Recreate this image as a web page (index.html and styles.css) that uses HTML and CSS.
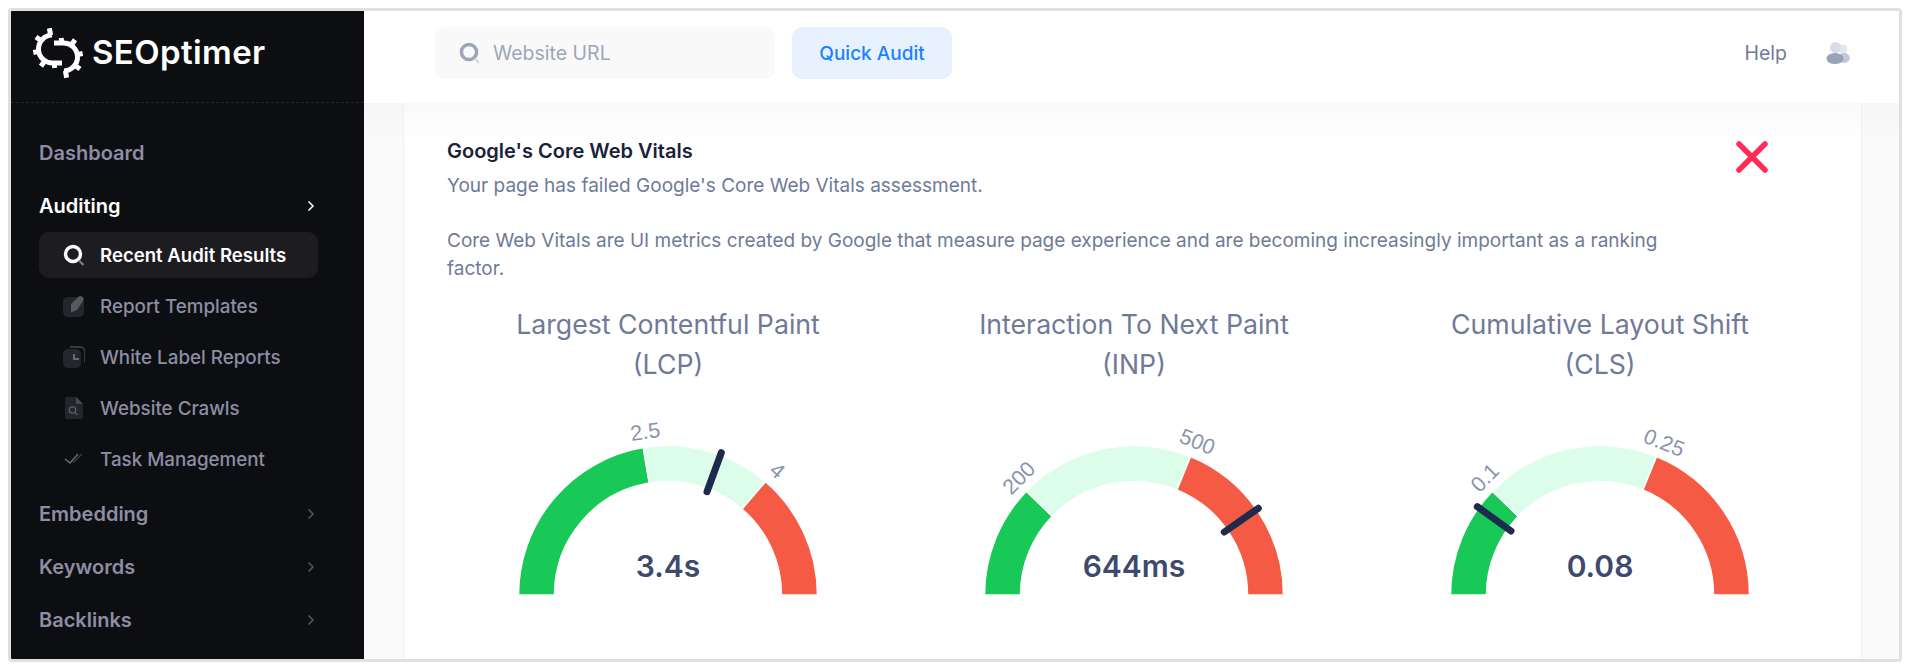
FILE: index.html
```html
<!DOCTYPE html>
<html lang="en">
<head>
  <meta charset="UTF-8">
  <title>SEOptimer - Core Web Vitals</title>
  <link rel="stylesheet" href="styles.css">
</head>
<body>
  <div class="frame">
    <aside class="sidebar">
      <div class="logo">
        <svg class="logo-mark" viewBox="0 0 50 52" fill="none" stroke="#fff">
          <g>
            <path d="M19 8A14 14 0 1 0 20 36h9" stroke-width="5"/>
            <path d="M17.600 8.200 16.400 1.300M8.500 14 3 10M6.200 24.400.300 25.500M12 33.500 8 39.200M21.200 36 21.800 41" stroke-width="5"/>
          </g>
          <g transform="rotate(180 25 26)">
            <path d="M19 8A14 14 0 1 0 20 36h9" stroke-width="5"/>
            <path d="M17.600 8.200 16.400 1.300M8.500 14 3 10M6.200 24.400.300 25.500M12 33.500 8 39.200M21.200 36 21.800 41" stroke-width="5"/>
          </g>
        </svg>
        <span class="logo-text">SEOptimer</span>
      </div>
      <nav class="nav">
        <a class="nav-top">Dashboard</a>
        <a class="nav-top nav-open">Auditing
          <svg class="chev" viewBox="0 0 8 12"><path d="M1.500 1.500 6 6l-4.500 4.500"/></svg>
        </a>
        <div class="sub-list">
          <a class="sub-item sub-active">
            <svg class="sub-icon" viewBox="0 0 22 22" fill="none">
              <circle cx="10" cy="10" r="7.500" stroke="#fff" stroke-width="3.400"/>
              <path d="M16.500 17 20.500 21" stroke="#77777d" stroke-width="2.400"/>
            </svg>
            Recent Audit Results
          </a>
          <a class="sub-item">
            <svg class="sub-icon" viewBox="0 0 22 22">
              <rect y="2" width="21" height="20" rx="5" fill="#25262b"/>
              <path d="M8 9 15 2.500a2.500 2.500 0 0 1 5 3.500L14 15l-6 2.500z" fill="#57585f"/>
            </svg>
            Report Templates
          </a>
          <a class="sub-item">
            <svg class="sub-icon" viewBox="0 0 22 22">
              <path d="M7 1h10a5 5 0 0 1 5 5v10" fill="none" stroke="#3a3b41" stroke-width="2"/>
              <rect y="3" width="18" height="19" rx="5" fill="#25262b"/>
              <path d="M11 8v5h5" fill="none" stroke="#6a6b72" stroke-width="2"/>
            </svg>
            White Label Reports
          </a>
          <a class="sub-item">
            <svg class="sub-icon" viewBox="0 0 22 22">
              <path d="M4 0h9l7 7v13a2 2 0 0 1-2 2H4a2 2 0 0 1-2-2V2a2 2 0 0 1 2-2z" fill="#25262b"/>
              <path d="M13 0l7 7h-7z" fill="#4a4b52"/>
              <circle cx="9.500" cy="13" r="3.200" fill="none" stroke="#5e5f66" stroke-width="1.300"/>
              <path d="M12 15.500 14.500 18" stroke="#5e5f66" stroke-width="1.300"/>
            </svg>
            Website Crawls
          </a>
          <a class="sub-item">
            <svg class="sub-icon" viewBox="0 0 22 22" fill="none" stroke-width="1.300">
              <path d="M2 11l5 4 8-9" stroke="#6d6e76"/>
              <path d="M10 14.500 19 6" stroke="#3e3f45"/>
            </svg>
            Task Management
          </a>
        </div>
        <a class="nav-top">Embedding
          <svg class="chev" viewBox="0 0 8 12"><path d="M1.500 1.500 6 6l-4.500 4.500"/></svg>
        </a>
        <a class="nav-top">Keywords
          <svg class="chev" viewBox="0 0 8 12"><path d="M1.500 1.500 6 6l-4.500 4.500"/></svg>
        </a>
        <a class="nav-top">Backlinks
          <svg class="chev" viewBox="0 0 8 12"><path d="M1.500 1.500 6 6l-4.500 4.500"/></svg>
        </a>
      </nav>
    </aside>

    <div class="right">
      <header class="topbar">
        <div class="search-box">
          <svg class="search-icon" viewBox="0 0 22 22" fill="none">
            <circle cx="10" cy="10" r="7.600" stroke="#9ea5bb" stroke-width="3.500"/>
            <path d="M16 16.500 20 21" stroke="#d5d8e2" stroke-width="2.200"/>
          </svg>
          <span>Website URL</span>
        </div>
        <button class="audit-btn">Quick Audit</button>
        <a class="help">Help</a>
        <svg class="users-icon" viewBox="0 0 24 22">
          <circle cx="17" cy="7" r="4.500" fill="#e6e8ee"/>
          <ellipse cx="18" cy="16" rx="6" ry="5" fill="#c3c8d6"/>
          <circle cx="9.500" cy="5.500" r="5.500" fill="#d9dce6"/>
          <ellipse cx="9" cy="16.500" rx="8.500" ry="5.500" fill="#9aa2b8"/>
        </svg>
      </header>

      <main class="content">
        <section class="card">
          <div class="card-head">
            <div class="card-copy">
              <h3>Google's Core Web Vitals</h3>
              <p>Your page has failed Google's Core Web Vitals assessment.</p>
              <p class="spaced">Core Web Vitals are UI metrics created by Google that measure page experience and are becoming increasingly important as a ranking factor.</p>
            </div>
            <svg class="fail-icon" viewBox="0 0 32 32"><path d="M3 3 29 29M29 3 3 29"/></svg>
          </div>

          <div class="gauges">
            <div class="gauge">
              <h4>Largest Contentful Paint<br>(LCP)</h4>
              <svg class="gauge-svg" viewBox="0 0 340 200">
                <path class="seg-good" d="M20.500 194A149.500 149.500 0 0 1 145.300 46.600L151.300 82.100A113.500 113.500 0 0 0 56.500 194Z"/>
                <path class="seg-mid" d="M145.300 46.600A149.500 149.500 0 0 1 267.500 80.700L244 108A113.500 113.500 0 0 0 151.300 82.100Z"/>
                <path class="seg-bad" d="M267.500 80.700A149.500 149.500 0 0 1 319.500 194L283.500 194A113.500 113.500 0 0 0 244 108Z"/>
                <line class="needle" x1="209" y1="90.700" x2="223.300" y2="51.700"/>
                <text class="tick" x="147.300" y="31" transform="rotate(-8 147.300 31)">2.5</text>
                <text class="tick" x="279" y="70" transform="rotate(41 279 70)">4</text>
                <text class="value" x="170" y="165">3.4s</text>
              </svg>
            </div>
            <div class="gauge">
              <h4>Interaction To Next Paint<br>(INP)</h4>
              <svg class="gauge-svg" viewBox="0 0 340 200">
                <path class="seg-good" d="M20.500 194A149.500 149.500 0 0 1 62.400 90.200L88.300 115.200A113.500 113.500 0 0 0 56.500 194Z"/>
                <path class="seg-mid" d="M62.400 90.200A149.500 149.500 0 0 1 226.500 55.600L212.900 88.900A113.500 113.500 0 0 0 88.300 115.200Z"/>
                <path class="seg-bad" d="M226.500 55.600A149.500 149.500 0 0 1 319.500 194L283.500 194A113.500 113.500 0 0 0 212.900 88.900Z"/>
                <line class="needle" x1="260.300" y1="131" x2="294.300" y2="107.300"/>
                <text class="tick" x="55" y="77" transform="rotate(-45 55 77)">200</text>
                <text class="tick" x="233.300" y="41" transform="rotate(22 233.300 41)">500</text>
                <text class="value" x="170" y="165">644ms</text>
              </svg>
            </div>
            <div class="gauge">
              <h4>Cumulative Layout Shift<br>(CLS)</h4>
              <svg class="gauge-svg" viewBox="0 0 340 200">
                <path class="seg-good" d="M20.500 194A149.500 149.500 0 0 1 62.400 90.200L88.300 115.200A113.500 113.500 0 0 0 56.500 194Z"/>
                <path class="seg-mid" d="M62.400 90.200A149.500 149.500 0 0 1 226.500 55.600L212.900 88.900A113.500 113.500 0 0 0 88.300 115.200Z"/>
                <path class="seg-bad" d="M226.500 55.600A149.500 149.500 0 0 1 319.500 194L283.500 194A113.500 113.500 0 0 0 212.900 88.900Z"/>
                <line class="needle" x1="47.300" y1="105.700" x2="81" y2="130"/>
                <text class="tick" x="55" y="77" transform="rotate(-45 55 77)">0.1</text>
                <text class="tick" x="234" y="42" transform="rotate(22 234 42)">0.25</text>
                <text class="value" x="170" y="165">0.08</text>
              </svg>
            </div>
          </div>
        </section>
      </main>
    </div>
  </div>
</body>
</html>
```

FILE: styles.css
```css
html, body {
  height: 100%;
}

body {
  margin: 0;
  padding: 8px;
  box-sizing: border-box;
  background-color: #fff;
  font-family: Inter, "Liberation Sans", sans-serif;
  overflow: hidden;
}

.frame {
  display: flex;
  width: 1894px;
  height: 654px;
  box-sizing: border-box;
  border: 3px solid #e0e0e0;
  border-radius: 4px;
  overflow: hidden;
}

/* sidebar */
.sidebar {
  flex: 0 0 353px;
  background-color: #0d0e12;
  color: #8d8da3;
}

.logo {
  display: flex;
  align-items: center;
  gap: 9px;
  height: 91px;
  padding: 0 0 0 22px;
  border-bottom: 1px dashed #232429;
}

.logo-mark {
  width: 50px;
  height: 52px;
  margin-bottom: 7px;
  overflow: visible;
}

.logo-text {
  margin-bottom: 9px;
  font-weight: 600;
  font-size: 33px;
  letter-spacing: 0.4px;
  color: #fff;
}

.nav {
  padding: 23px 46px 0 28px;
}

.nav-top {
  display: flex;
  align-items: center;
  justify-content: space-between;
  height: 53px;
  padding-right: 3px;
  font-size: 20px;
  font-weight: 600;
}

.nav-open {
  color: #fff;
}

.chev {
  width: 8px;
  height: 12px;
  fill: none;
  stroke: #55565e;
  stroke-width: 1.500;
}

.nav-open .chev {
  stroke: #fff;
}

.sub-list {
  display: flex;
  flex-direction: column;
  gap: 5px;
  margin-bottom: 5px;
}

.sub-item {
  display: flex;
  align-items: center;
  gap: 15px;
  height: 46px;
  padding-left: 24px;
  border-radius: 10px;
  font-size: 18.800px;
  font-weight: 500;
}

.sub-active {
  background-color: #1c1c21;
  color: #fff;
  font-size: 18.600px;
  font-weight: 600;
}

.sub-icon {
  width: 22px;
  height: 22px;
  flex: none;
}

/* top bar */
.right {
  flex: 1;
  display: flex;
  flex-direction: column;
  min-width: 0;
}

.topbar {
  display: flex;
  align-items: center;
  flex: 0 0 92px;
  box-sizing: border-box;
  padding: 0 49px 8px 71px;
  background-color: #fff;
}

.search-box {
  display: flex;
  align-items: center;
  gap: 12px;
  width: 340px;
  height: 52px;
  box-sizing: border-box;
  padding-left: 24px;
  border-radius: 10px;
  background-color: #f9f9fa;
  color: #9ea5bb;
  font-size: 19.500px;
}

.search-icon {
  width: 22px;
  height: 22px;
}

.audit-btn {
  width: 160px;
  height: 52px;
  margin-left: 17px;
  border: none;
  border-radius: 10px;
  background-color: #e8f2ff;
  color: #1a82ff;
  font-family: inherit;
  font-size: 19px;
  font-weight: 500;
}

.help {
  margin-left: auto;
  color: #6f7a99;
  font-size: 19.500px;
}

.users-icon {
  width: 24px;
  height: 22px;
  margin-left: 39px;
}

/* main content */
.content {
  flex: 1;
  padding: 0 37px 0 39px;
  background: linear-gradient(#f6f6f7, #fafafb 40px);
}

.card {
  height: 100%;
  box-sizing: border-box;
  padding: 34px 29px 0 43px;
  border-left: 1px solid #f0f0f2;
  border-right: 1px solid #f0f0f2;
  background: linear-gradient(#f9f9f9, #fff 36px);
}

.card-head {
  display: flex;
  justify-content: space-between;
}

.card-copy {
  width: 1240px;
}

.card-copy h3 {
  margin: 0 0 7px;
  color: #1a2238;
  font-size: 20px;
  font-weight: 600;
  line-height: 28px;
}

.card-copy p {
  margin: 0;
  color: #6f7a99;
  font-size: 19px;
  line-height: 28px;
}

.card-copy .spaced {
  margin-top: 27px;
}

.fail-icon {
  width: 32px;
  height: 32px;
  margin: 4px 64px 0 0;
  fill: none;
  stroke: #ff2d55;
  stroke-width: 5.500;
  stroke-linecap: round;
}

.gauges {
  display: grid;
  grid-template-columns: repeat(3, 466px);
  margin: 22px 0 0 -12px;
}

.gauge {
  display: flex;
  flex-direction: column;
  align-items: center;
}

.gauge h4 {
  margin: 0 0 17px;
  color: #6f7a99;
  font-size: 26.700px;
  font-weight: 400;
  line-height: 39.500px;
  text-align: center;
}

.gauge-svg {
  width: 340px;
  height: 200px;
}

.seg-good, .seg-mid, .seg-bad {
  stroke: #fff;
  stroke-width: 1.500;
}

.seg-good {
  fill: #19c957;
}

.seg-mid {
  fill: #dcfde9;
}

.seg-bad {
  fill: #f55a45;
}

.needle {
  stroke: #1f2b4d;
  stroke-width: 7;
  stroke-linecap: round;
}

.tick {
  fill: #8a93ad;
  font-family: "Liberation Sans", sans-serif;
  font-size: 21.500px;
  text-anchor: middle;
  dominant-baseline: central;
}

.value {
  fill: #3e4a6d;
  font-size: 30px;
  font-weight: 600;
  text-anchor: middle;
  dominant-baseline: central;
}
```
